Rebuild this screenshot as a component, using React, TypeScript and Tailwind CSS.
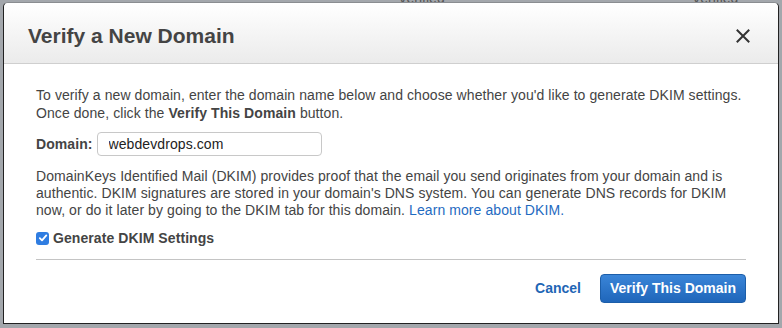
import type { ReactNode } from 'react'

// Modal "Verify a New Domain" drawn over a greyed-out console page.
function CheckIcon(): ReactNode {
  return (
    <span className="flex h-[13px] w-[13px] items-center justify-center rounded-[3px] bg-[#2f7de1]">
      <svg width="10" height="10" viewBox="0 0 10 10" fill="none">
        <path d="M1.8 5.2 4 7.4 8.3 2.4" stroke="white" strokeWidth="1.8" strokeLinecap="round" strokeLinejoin="round" />
      </svg>
    </span>
  )
}

export default function App(): ReactNode {
  return (
    <div
      className="relative h-[328px] w-[782px] overflow-hidden bg-[#a3a7ac] pl-[3px] pt-[2px]"
      style={{ fontFamily: '"Liberation Sans", Arial, Helvetica, sans-serif' }}
    >
      {/* page content peeking out above the dialog */}
      <div className="absolute left-0 top-[-12px] flex w-full text-[14px] text-[#555]">
        <span className="ml-[398px]">Verified</span>
        <span className="ml-[247px]">Verified</span>
      </div>

      <div className="relative flex h-[322px] w-[776px] flex-col rounded-t-[5px] border border-[#222] border-t-[#8a8d91] bg-white">
        <div className="flex h-[61px] items-center justify-between rounded-t-[5px] border-b border-[#cfcfcf] bg-gradient-to-b from-[#ffffff] to-[#ebebeb] pl-[24px] pr-[28px]">
          <h1 className="mt-[5px] text-[21px] font-bold text-[#444]">Verify a New Domain</h1>
          <svg width="14" height="14" viewBox="0 0 14 14" className="mt-[5px]">
            <path d="M1.5 1.5 12.5 12.5M12.5 1.5 1.5 12.5" stroke="#333" strokeWidth="2" strokeLinecap="square" />
          </svg>
        </div>

        <div className="flex flex-col px-[32px] pt-[22px] text-[14px] tracking-[0.08px] text-[#444]">
          <p className="leading-[18px]">
            To verify a new domain, enter the domain name below and choose whether you'd like to generate DKIM settings.
            Once done, click the <b>Verify This Domain</b> button.
          </p>

          <div className="mt-[10px] flex items-center gap-[4px]">
            <span className="font-bold">Domain:</span>
            <input
              readOnly
              value="webdevdrops.com"
              className="h-[24px] w-[225px] rounded-[4px] border border-[#c8c8c8] px-[11px] text-[14px] text-[#222] outline-none"
            />
          </div>

          <p className="mt-[12px] leading-[17px]">
            DomainKeys Identified Mail (DKIM) provides proof that the email you send originates from your domain and is
            authentic. DKIM signatures are stored in your domain's DNS system. You can generate DNS records for DKIM
            now, or do it later by going to the DKIM tab for this domain.{' '}
            <a className="text-[#1f6bc1]">Learn more about DKIM.</a>
          </p>

          <div className="mt-[10px] flex h-[18px] items-center gap-[4px]">
            <CheckIcon />
            <span className="font-bold">Generate DKIM Settings</span>
          </div>

          <div className="mt-[12px] h-px bg-[#c4c4c4]" />

          <div className="mt-[14px] flex items-center justify-end gap-[19px] tracking-normal">
            <button type="button" className="text-[14px] font-bold text-[#1f66b5]">
              Cancel
            </button>
            <button
              type="button"
              className="h-[29px] w-[146px] rounded-[4px] border border-[#1c5ea9] bg-gradient-to-b from-[#3a85d8] to-[#1f66ba] text-[14px] font-bold text-white"
            >
              Verify This Domain
            </button>
          </div>
        </div>
      </div>
    </div>
  )
}
